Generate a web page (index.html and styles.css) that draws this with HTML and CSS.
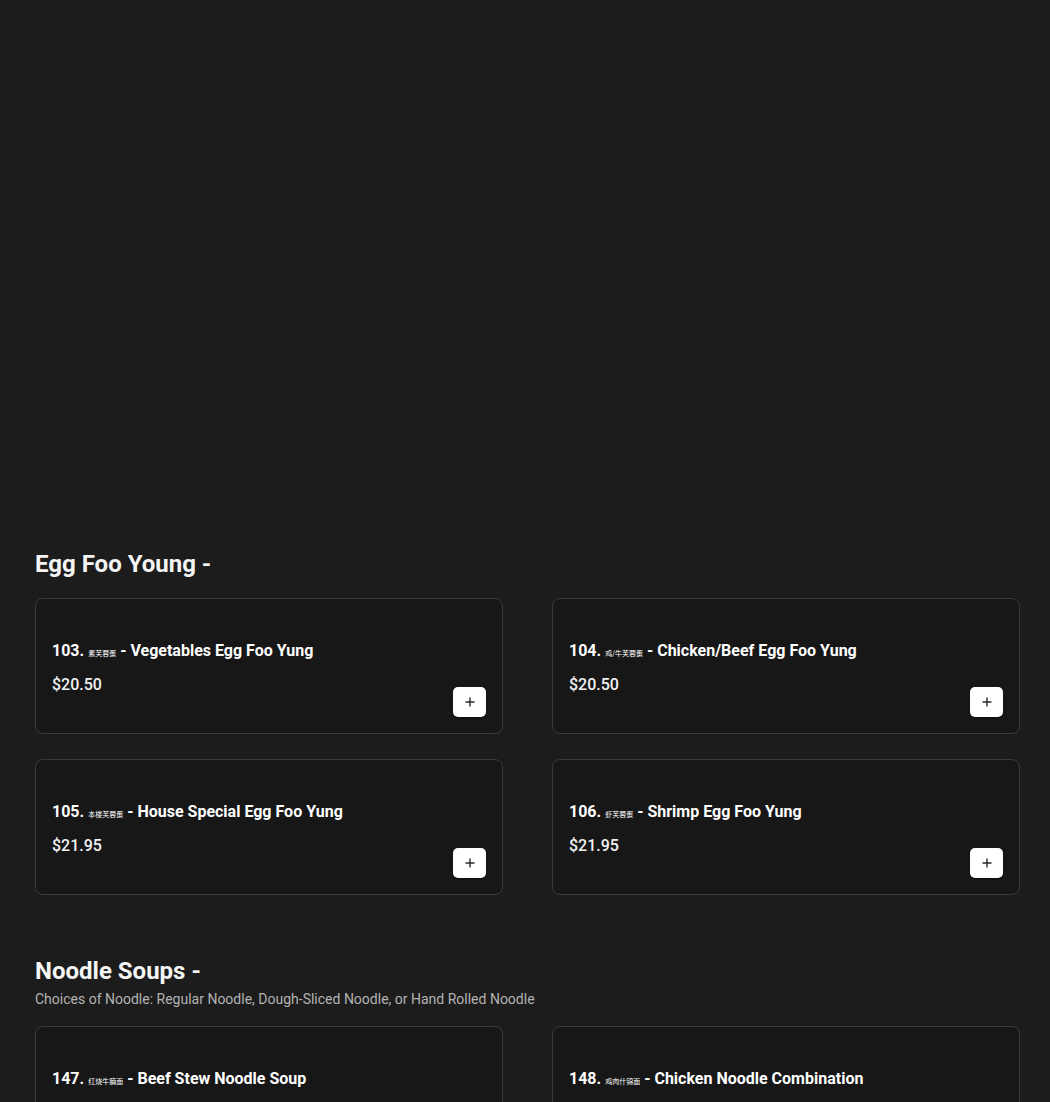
FILE: index.html
```html
<!DOCTYPE html>
<html lang="en">
<head>
<meta charset="utf-8">
<title>Menu</title>
<link rel="stylesheet" href="styles.css">
</head>
<body>
<div class="hero"></div>
<main class="menu">
  <section class="category">
    <h2 class="cat-title">Egg Foo Young -</h2>
    <div class="grid">
      <article class="card">
        <div class="card-top"></div>
        <h3 class="item-name">103. <span class="zh">素芙蓉蛋</span> - Vegetables Egg Foo Yung</h3>
        <div class="card-bottom">
          <span class="price">$20.50</span>
          <button class="add" aria-label="Add"><svg viewBox="0 0 12 12" width="12" height="12"><path d="M6 1.5v9M1.5 6h9" stroke="#2b2b2b" stroke-width="1.4" fill="none"/></svg></button>
        </div>
      </article>
      <article class="card">
        <div class="card-top"></div>
        <h3 class="item-name">104. <span class="zh">鸡/牛芙蓉蛋</span> - Chicken/Beef Egg Foo Yung</h3>
        <div class="card-bottom">
          <span class="price">$20.50</span>
          <button class="add" aria-label="Add"><svg viewBox="0 0 12 12" width="12" height="12"><path d="M6 1.5v9M1.5 6h9" stroke="#2b2b2b" stroke-width="1.4" fill="none"/></svg></button>
        </div>
      </article>
      <article class="card">
        <div class="card-top"></div>
        <h3 class="item-name">105. <span class="zh">本楼芙蓉蛋</span> - House Special Egg Foo Yung</h3>
        <div class="card-bottom">
          <span class="price">$21.95</span>
          <button class="add" aria-label="Add"><svg viewBox="0 0 12 12" width="12" height="12"><path d="M6 1.5v9M1.5 6h9" stroke="#2b2b2b" stroke-width="1.4" fill="none"/></svg></button>
        </div>
      </article>
      <article class="card">
        <div class="card-top"></div>
        <h3 class="item-name">106. <span class="zh">虾芙蓉蛋</span> - Shrimp Egg Foo Yung</h3>
        <div class="card-bottom">
          <span class="price">$21.95</span>
          <button class="add" aria-label="Add"><svg viewBox="0 0 12 12" width="12" height="12"><path d="M6 1.5v9M1.5 6h9" stroke="#2b2b2b" stroke-width="1.4" fill="none"/></svg></button>
        </div>
      </article>
    </div>
  </section>
  <section class="category">
    <h2 class="cat-title">Noodle Soups -</h2>
    <p class="cat-desc">Choices of Noodle: Regular Noodle, Dough-Sliced Noodle, or Hand Rolled Noodle</p>
    <div class="grid">
      <article class="card">
        <div class="card-top"></div>
        <h3 class="item-name">147. <span class="zh">红烧牛腩面</span> - Beef Stew Noodle Soup</h3>
        <div class="card-bottom">
          <span class="price">$18.95</span>
          <button class="add" aria-label="Add"><svg viewBox="0 0 12 12" width="12" height="12"><path d="M6 1.5v9M1.5 6h9" stroke="#2b2b2b" stroke-width="1.4" fill="none"/></svg></button>
        </div>
      </article>
      <article class="card">
        <div class="card-top"></div>
        <h3 class="item-name">148. <span class="zh">鸡肉什锦面</span> - Chicken Noodle Combination</h3>
        <div class="card-bottom">
          <span class="price">$18.95</span>
          <button class="add" aria-label="Add"><svg viewBox="0 0 12 12" width="12" height="12"><path d="M6 1.5v9M1.5 6h9" stroke="#2b2b2b" stroke-width="1.4" fill="none"/></svg></button>
        </div>
      </article>
    </div>
  </section>
</main>
</body>
</html>
```
FILE: styles.css
```css
* { box-sizing: border-box; }
html, body {
  margin: 0;
  padding: 0;
  background: #1c1c1c;
  color: #ffffff;
  font-family: Roboto, "Noto Sans", "Noto Sans CJK SC", sans-serif;
}
.hero {
  height: 548px;
}
.menu {
  padding: 0 30px 0 35px;
}
.category {
  margin-bottom: 60px;
}
.cat-title {
  margin: 0;
  font-size: 24px;
  line-height: 32px;
  font-weight: 700;
  color: #f5f5f5;
}
.cat-desc {
  margin: 2px 0 0;
  font-size: 14px;
  line-height: 20px;
  color: #b3b3b3;
}
.grid {
  display: grid;
  grid-template-columns: 1fr 1fr;
  column-gap: 49px;
  row-gap: 25px;
  margin-top: 18px;
}
.cat-desc + .grid {
  margin-top: 17px;
}
.card {
  background: #171717;
  border: 1px solid #3a3a3a;
  border-radius: 8px;
  padding: 16px;
  display: flex;
  flex-direction: column;
  height: 136px;
}
.card-top {
  height: 26px;
}
.item-name {
  margin: 0;
  font-size: 16px;
  line-height: 22px;
  font-weight: 700;
  color: #ffffff;
}
.zh {
  font-family: "Noto Sans CJK SC", sans-serif;
  font-weight: 400;
  font-size: 7px;
}
.card-bottom {
  margin-top: 10px;
  display: flex;
  justify-content: space-between;
  height: 44px;
}
.price {
  align-self: flex-start;
  font-size: 16px;
  line-height: 22px;
  font-weight: 500;
  color: #f2f2f2;
}
.add {
  align-self: flex-end;
  width: 33px;
  height: 30px;
  border: none;
  border-radius: 5px;
  background: #ffffff;
  padding: 0;
  display: flex;
  align-items: center;
  justify-content: center;
  box-shadow: 0 1px 2px rgba(0,0,0,0.4);
}
```
